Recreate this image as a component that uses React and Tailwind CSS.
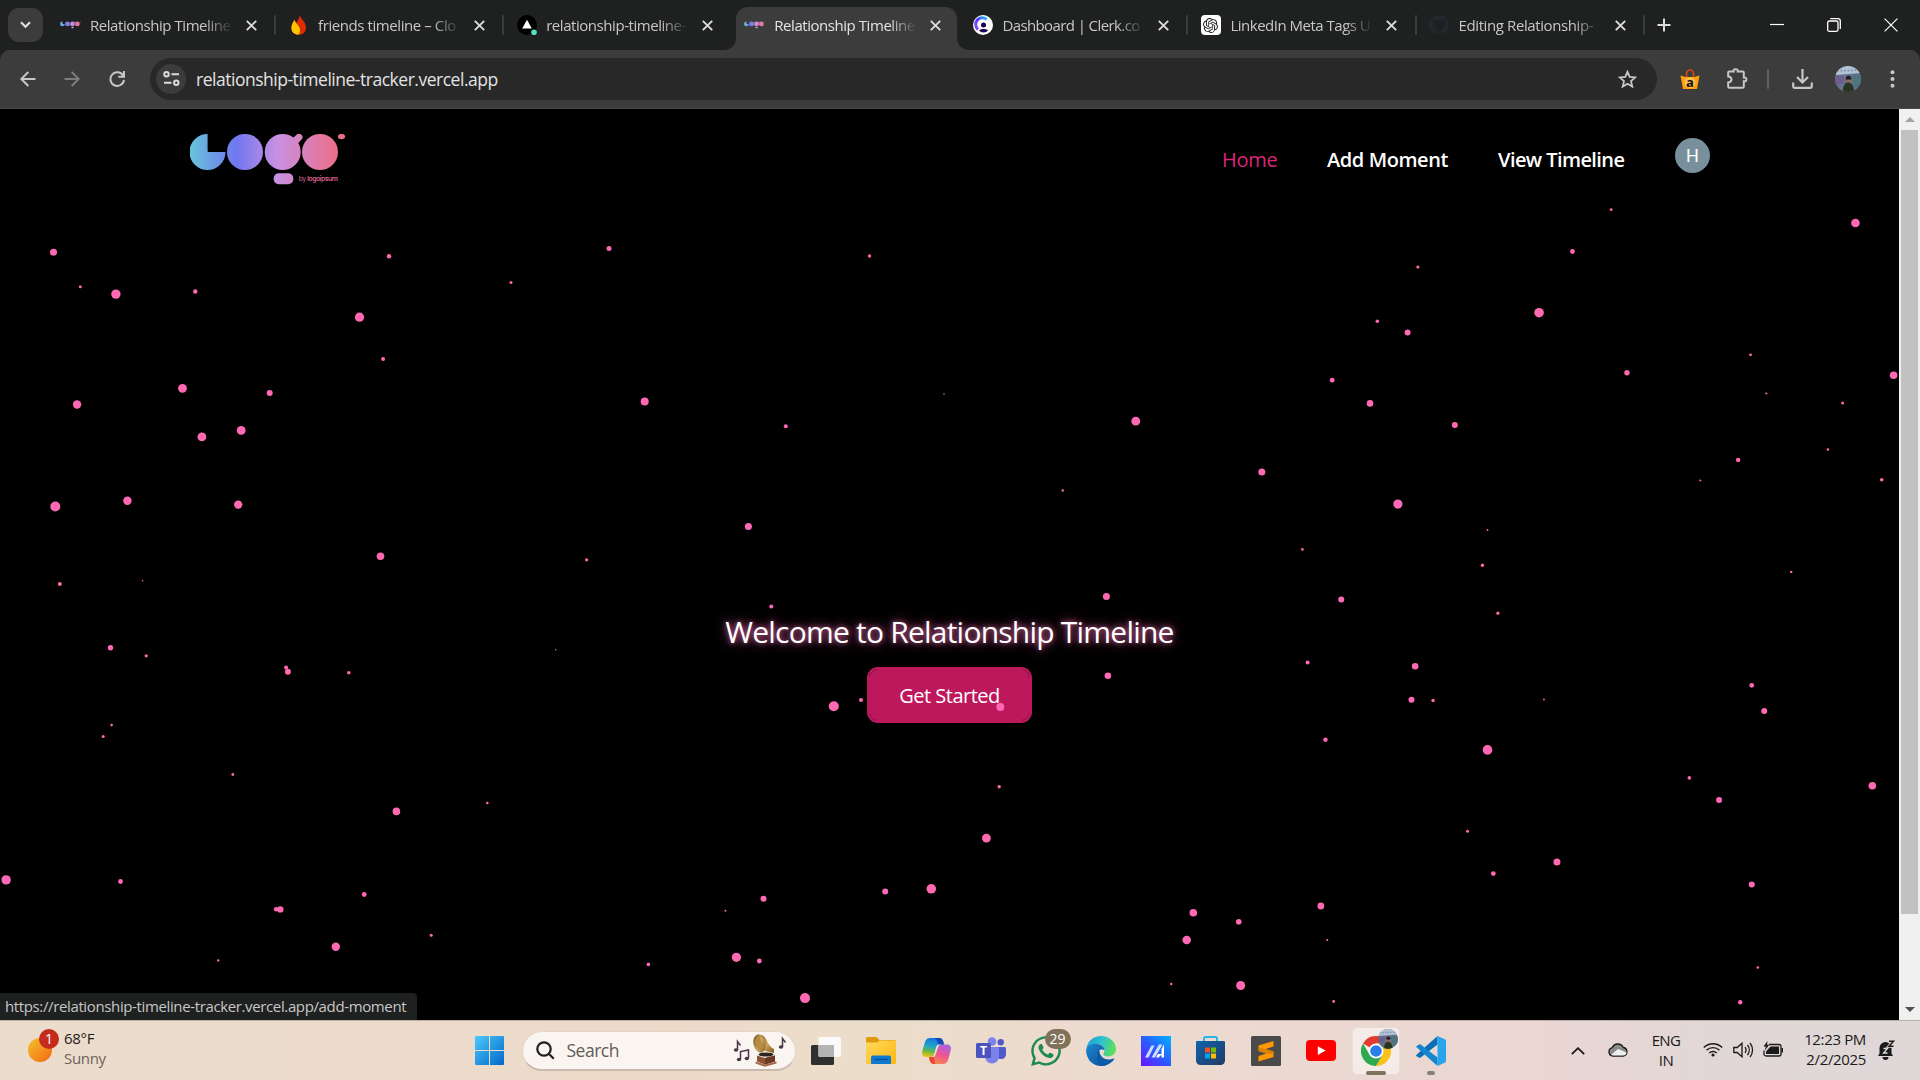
import React from "react";
import { FaGithub, FaWhatsapp } from "react-icons/fa";
import { SiOpenai } from "react-icons/si";

/* Floating particles: [x, y, radius] in viewport coordinates */
const LEFT_PARTICLES = [
  [53.5, 252.3, 3.5], [80.3, 286.8, 1.5], [115.9, 294.1, 4.7], [195.3, 291.5, 2.2], [389, 256.2, 2.2],
  [609, 248.6, 2.5], [511, 282.6, 1.5], [869.5, 256, 1.7], [359.5, 317.2, 4.6], [383.1, 359, 2],
  [182.5, 388.3, 4.4], [269.7, 393, 3], [77.1, 404.5, 4.2], [201.9, 436.9, 4.4], [241.2, 430.4, 4.4],
  [644.7, 401.4, 4], [785.8, 426.2, 2], [944, 394, 0.8], [55.3, 506.5, 5], [127.4, 500.7, 4.2],
  [238.2, 504.6, 4.2], [380.5, 556.2, 3.8], [586.6, 559.8, 1.6], [748.4, 526.4, 3.5], [59.8, 583.9, 2],
  [142.6, 580.7, 0.8], [771.3, 606.4, 2], [110.5, 647.7, 2.7], [146.2, 655.8, 1.6], [286.1, 667.6, 2],
  [287.9, 671.7, 3], [348.8, 672.8, 1.8], [555.7, 649.8, 0.7], [833.8, 706.3, 5], [861, 700, 2],
  [111.6, 725.1, 1.3], [103.2, 736.6, 1.5], [232.8, 774.5, 1.4], [396.4, 811.4, 3.8], [487.3, 803, 1.3],
  [6.1, 879.9, 4.7], [120.5, 881.5, 2.4], [364.2, 894.5, 2.4], [276.1, 909.2, 2.2], [280.3, 909.4, 3.2],
  [335.8, 946.8, 4.2], [431.2, 935.3, 1.5], [218.2, 960.4, 1.2], [648.4, 964.4, 1.8], [725.4, 910.8, 1],
  [763.5, 898.7, 3], [736.4, 957.3, 4.6], [759.3, 961, 2.4], [805, 998.1, 5], [885.2, 891.4, 3],
  [931.3, 888.8, 4.8],
];

const RIGHT_PARTICLES = [
  [1611.8, 209.7, 1.4], [1856.3, 223, 4.3], [1573, 251.5, 2.4], [1418.3, 267, 1.6],
  [1539.6, 312.7, 4.8], [1377.7, 321.3, 1.8], [1408, 332.6, 3], [1751.3, 354.8, 1.4], [1627.6, 372.8, 2.7],
  [1894.5, 375.2, 3.8], [1332.5, 380.2, 2.4], [1767.1, 393.5, 1.1], [1370.4, 403.4, 3.3], [1843.5, 402.9, 1.5],
  [1135.9, 421.2, 4.4], [1455.3, 424.9, 3], [1828.7, 449.5, 1.3], [1738.9, 459.9, 2.2], [1262.1, 472, 3.5],
  [1701, 480.6, 1], [1882.6, 479.8, 1.8], [1062.8, 490.5, 1.2], [1398.3, 504.1, 4.6], [1488, 530, 0.9],
  [1302.7, 549.4, 1.3], [1482.9, 565.3, 1.7], [1792, 571.9, 1.2], [1106.5, 596.4, 3.5], [1341.6, 599.6, 3],
  [1498.4, 613.2, 1.6], [1307.9, 662.6, 2], [1415.6, 666.3, 3.3], [1108, 675.7, 3.3], [1411.9, 699.7, 3],
  [1433.5, 700.5, 1.7], [1544.5, 699.5, 0.9], [1752.5, 685.3, 2.4], [1765, 711, 3], [1000.3, 707, 4],
  [1325.8, 739.7, 2.2], [1488, 749.9, 4.8], [999.2, 786.8, 1.7], [1690, 777.9, 1.8], [1873.2, 785.8, 3.8],
  [1719.8, 800.1, 3], [986.4, 838.1, 4.4], [1468, 831.3, 1.5], [1493.8, 873.6, 2.4], [1557.5, 862.1, 3.5],
  [1752.5, 884.6, 3], [1321.2, 906, 3.4], [1193.5, 912.8, 3.8], [1239, 921.7, 2.8], [1186.9, 940, 4.3],
  [1327.6, 940, 1], [1758.6, 967.5, 1.3], [1171.4, 984, 1.2], [1240.9, 985.5, 4.5], [1334, 1001.5, 1.4],
  [1741, 1002.3, 2.2],
];

const Dots = ({ points }) => points.map(([x, y, r], i) => <circle key={i} cx={x} cy={y} r={r} />);

function LogoArt({ id, caption }) {
  return (
    <>
      <defs>
        <linearGradient id={id} gradientUnits="userSpaceOnUse" x1="0" y1="0" x2="155" y2="0">
          <stop offset="0" stopColor="#67c3da" />
          <stop offset="0.3" stopColor="#7077f0" />
          <stop offset="0.56" stopColor="#c791e2" />
          <stop offset="1" stopColor="#f06a7d" />
        </linearGradient>
      </defs>
      <g fill={`url(#${id})`}>
        <path d="M17.5 0A18 18 0 1 0 35.5 18H18.6a1 1 0 0 1-1-1V0z" />
        <circle cx="55" cy="18" r="18" />
        <circle cx="92.7" cy="18" r="18" />
        <path d="M102 5l4.500-4.200a3.400 3.400 0 0 1 5 4.800l-4 4.500z" />
        <rect x="83.700" y="39.300" width="19.600" height="11" rx="5" />
        <circle cx="130" cy="18" r="18" />
        <ellipse cx="151.500" cy="2.500" rx="3.600" ry="2.700" />
      </g>
      {caption && (
        <text x="108.800" y="46.500" fontSize="6.800" fill="#d9638a" fontFamily="Inter, sans-serif" textLength="39">
          by <tspan fontWeight="600">logoipsum</tspan>
        </text>
      )}
    </>
  );
}

const LogoFavicon = ({ id }) => (
  <svg className="h-[8px] w-[21px]" viewBox="-1 -1 158 54">
    <LogoArt id={id} />
  </svg>
);

const Flame = () => (
  <svg width="16" height="20" viewBox="0 0 16 20">
    <path d="M8.500 0c1 3.500 6.500 7 6.500 12.500 0 4.500-3 7.300-7 7.300-3.500 0-5-3-4.500-6.800C4 8.500 8 5.500 8.500 0z" fill="#dd2c00" />
    <path d="M3.500 4.500C2 7 .5 9.500.5 13c0 4 3 6.500 7 6.500-3.500-3-1.500-5-1.500-8 0-3-2-4-2.500-7z" fill="#ff9100" />
    <path d="M3.300 5.500c2.200 3.500 5.700 6 5.700 9.500 0 3-1 4.800-2.500 4.500C2.500 19 .5 16.500.5 13c0-3 1.500-5 2.800-7.500z" fill="#ffc400" />
  </svg>
);

const VercelIcon = () => (
  <svg width="20" height="20" viewBox="0 0 20 20">
    <circle cx="10" cy="10" r="10" fill="#000" />
    <path d="M10 4.800l4.800 8.800H5.200z" fill="#fff" />
    <circle cx="17" cy="17.200" r="2.800" fill="#50e3c2" />
  </svg>
);

const ClerkIcon = () => (
  <svg width="20" height="20" viewBox="0 0 20 20">
    <defs>
      <linearGradient id="clerk" x1="1" y1="0" x2="0" y2="1">
        <stop offset="0" stopColor="#17ccfc" />
        <stop offset="0.5" stopColor="#5d31ff" />
        <stop offset="1" stopColor="#8a4dff" />
      </linearGradient>
    </defs>
    <circle cx="10" cy="10" r="10" fill="#fff" />
    <path d="M13.800 4.300A6.700 6.700 0 0 0 5 14.500" fill="none" stroke="url(#clerk)" strokeWidth="3" />
    <circle cx="10.500" cy="10" r="2.500" fill="#1f0256" />
    <path d="M6 15.200c2.500-1.600 6.500-1.600 9 0-1.800 3-7.200 3-9 0z" fill="#1f0256" />
  </svg>
);

const OpenAiIcon = () => (
  <span className="flex h-5 w-5 items-center justify-center rounded-[4px] bg-white text-[#222]">
    <SiOpenai size={15} />
  </span>
);

const TABS = [
  { title: "Relationship Timeline", icon: <LogoFavicon id="fav1" />, track: "tracking-[-0.45px]" },
  { title: "friends timeline – Clo", icon: <Flame />, track: "tracking-[-0.42px]" },
  { title: "relationship-timeline-", icon: <VercelIcon />, track: "tracking-[-0.45px]", noSep: true },
  { title: "Relationship Timeline", icon: <LogoFavicon id="fav2" />, track: "tracking-[-0.45px]", active: true, noSep: true },
  { title: "Dashboard | Clerk.co", icon: <ClerkIcon />, track: "tracking-[-0.6px]" },
  { title: "LinkedIn Meta Tags U", icon: <OpenAiIcon />, track: "tracking-[-0.5px]" },
  { title: "Editing Relationship-", icon: <FaGithub size={20} className="text-[#24292f]" />, track: "tracking-[-0.4px]" },
];

function Tab({ tab }) {
  return (
    <div className="relative flex h-[50px] w-[228.100px] shrink-0 items-center">
      {tab.active && (
        <svg className="absolute top-[7px] -left-[8px]" width="245" height="43" viewBox="0 0 245 43">
          <path d="M0 43c7 0 12-5 12-12V12C12 5 17 0 24 0h197c7 0 12 5 12 12v19c0 7 5 12 12 12z" fill="#3c3c3c" />
        </svg>
      )}
      <div className="relative ml-3 flex w-[21px] justify-center">{tab.icon}</div>
      <div
        className={`relative ml-[9px] w-[143px] pt-px text-[15px] whitespace-nowrap ${tab.track} ${tab.active ? "text-[#e3e3e3]" : "text-[#c7c7c7]"} [mask-image:linear-gradient(to_right,black_80%,transparent_100%)]`}
      >
        {tab.title}
      </div>
      <svg className="relative ml-[13px]" width="11" height="11" viewBox="0 0 11 11">
        <path d="M.8.8l9.400 9.400M10.200.8L.8 10.200" stroke="#dcdcdc" strokeWidth="1.900" />
      </svg>
      {!tab.noSep && <div className="relative ml-auto h-5 w-[2px] rounded bg-[#3c3c3c]" />}
    </div>
  );
}

function TabStrip() {
  return (
    <div className="flex h-[50px] items-center bg-[#1f2020]">
      <div className="ml-2 flex h-[34px] w-[35px] shrink-0 items-center justify-center rounded-[11px] bg-[#3c3c3c]">
        <svg width="11" height="8" viewBox="0 0 11 8">
          <path d="M1 1.300l4.500 4.500L10 1.300" fill="none" stroke="#e3e3e3" strokeWidth="2" />
        </svg>
      </div>
      <div className="ml-[5px] flex">
        {TABS.map((t, i) => (
          <Tab key={i} tab={t} />
        ))}
      </div>
      <svg className="ml-[12px]" width="14" height="14" viewBox="0 0 14 14">
        <path d="M7 .5v13M.5 7h13" stroke="#dcdcdc" strokeWidth="2" />
      </svg>
      <div className="mr-[22px] ml-auto flex items-center gap-[43px]">
        <svg width="14" height="14" viewBox="0 0 14 14">
          <path d="M0 6.500h14" stroke="#fff" strokeWidth="1.200" />
        </svg>
        <svg width="14" height="14" viewBox="0 0 14 14" fill="none" stroke="#fff" strokeWidth="1.300">
          <rect x=".7" y="3" width="10.300" height="10.300" rx="1.500" />
          <path d="M3.300.7H11A2.300 2.300 0 0 1 13.300 3v8" />
        </svg>
        <svg width="14" height="14" viewBox="0 0 14 14">
          <path d="M.6.6l12.800 12.800M13.400.6L.6 13.400" stroke="#fff" strokeWidth="1.200" />
        </svg>
      </div>
    </div>
  );
}

/* Round portrait used in the toolbar and on the taskbar's browser badge */
function Portrait({ size, id }) {
  return (
    <svg width={size} height={size} viewBox="0 0 26 26">
      <defs>
        <clipPath id={id}>
          <circle cx="13" cy="13" r="13" />
        </clipPath>
      </defs>
      <g clipPath={`url(#${id})`}>
        <path fill="#66718f" d="M0 0h26v26H0z" />
        <path fill="#b3c3d6" d="M0 0h26v7l-26 2z" />
        <path d="M2 5l22-1" stroke="#8b9ab0" strokeWidth="2" strokeDasharray="2 1.500" />
        <path fill="#6d5f8d" d="M0 10h9v8H0z" />
        <path fill="#4f7480" d="M17 9h9v12h-9z" />
        <circle cx="13.500" cy="12.500" r="2.700" fill="#241c1c" />
        <path fill="#9a6a55" d="M11.500 13.500h4l2 3h-6z" />
        <path fill="#27351e" d="M8 26c0-7 2-9.500 5-9.500s6 2.500 6 9.500z" />
      </g>
    </svg>
  );
}

function Toolbar() {
  return (
    <div className="bg-[#1f2020]">
      <div className="flex h-[59px] items-center rounded-t-[10px] border-b border-[#4a4a4a] bg-[#3c3c3c] pb-px">
        <svg className="ml-5" width="16" height="16" viewBox="0 0 16 16" fill="none" stroke="#c7c7c7" strokeWidth="2">
          <path d="M15.500 8H1.500M8.300 1L1.300 8l7 7" />
        </svg>
        <svg className="ml-[28px]" width="16" height="16" viewBox="0 0 16 16" fill="none" stroke="#7d7d7d" strokeWidth="2">
          <path d="M.5 8h14M7.700 1l7 7-7 7" />
        </svg>
        <svg className="ml-[29px]" width="17" height="16" viewBox="0 0 17 16" fill="none" stroke="#c7c7c7" strokeWidth="2">
          <path d="M14.300 5A6.800 6.800 0 1 0 15 8.800M15 0v5.700H9.300" />
        </svg>
        <div className="ml-[24px] flex h-[42px] w-[1507px] items-center rounded-full bg-[#282828]">
          <div className="ml-[6px] flex h-[30px] w-[30px] items-center justify-center rounded-full bg-[#3c3c3c]">
            <svg width="17" height="15" viewBox="0 0 17 15" fill="none" stroke="#dcdcdc" strokeWidth="2">
              <circle cx="3.500" cy="3.200" r="2.200" />
              <path d="M8.500 3.200H16M1 11.800h7.500" />
              <circle cx="13.300" cy="11.800" r="2.200" />
            </svg>
          </div>
          <div className="ml-[10px] pt-[2px] text-[17.5px] tracking-[-0.48px] text-[#e3e3e3]">relationship-timeline-tracker.vercel.app</div>
          <svg className="mr-[20px] ml-auto" width="19" height="18" viewBox="0 0 19 18" fill="none" stroke="#c7c7c7" strokeWidth="1.800">
            <path d="M9.500 1.800l2.200 5.100 5.600.5-4.300 3.700 1.300 5.500-4.800-2.900-4.800 2.900L6 11.100 1.700 7.400l5.600-.5z" />
          </svg>
        </div>
        <svg className="ml-[23px]" width="20" height="20" viewBox="0 0 20 20">
          <path d="M6.500 8V4.500a3.500 3.500 0 0 1 7 0V8" fill="none" stroke="#d9480f" strokeWidth="1.700" />
          <path d="M.5 6.500l5 1.500h9l5-1.500L17 20H3z" fill="#ff9f0a" />
          <circle cx="10" cy="13.500" r="5.500" fill="#ffc04d" />
          <text x="10" y="17.500" textAnchor="middle" fontSize="13" fontWeight="700" fontFamily="Open Sans" fill="#111">a</text>
        </svg>
        <svg className="ml-[26px]" width="22" height="21" viewBox="0 0 22 21">
          <path d="M2.200 4.500a1 1 0 0 1 1-1h4.500c-.4-2 .5-2.300 2-2.300s2.400.4 2 2.300h5.100a1 1 0 0 1 1 1v5c2-.3 2.600.4 2.600 1.800s-.6 2.200-2.600 1.900v5.600a1 1 0 0 1-1 1H3.200a1 1 0 0 1-1-1v-4.400c2.700-.2 3.300-1.800 3.300-2.800s-.6-2.800-3.300-3z" fill="none" stroke="#c7c7c7" strokeWidth="2" />
        </svg>
        <div className="ml-[19px] h-5 w-[2px] rounded bg-[#5f6061]" />
        <svg className="ml-[23px]" width="21" height="20" viewBox="0 0 21 20" fill="none" stroke="#c7c7c7" strokeWidth="2.200">
          <path d="M10.500 0v13M5 8l5.500 5.500L16 8M1.200 13.500v4a1.300 1.300 0 0 0 1.300 1.300h16a1.300 1.300 0 0 0 1.300-1.300v-4" />
        </svg>
        <div className="ml-[22px]">
          <Portrait size={26} id="avatarTop" />
        </div>
        <svg className="ml-[29px]" width="5" height="18" viewBox="0 0 5 18" fill="#c7c7c7">
          <circle cx="2.500" cy="2.200" r="2" />
          <circle cx="2.500" cy="9" r="2" />
          <circle cx="2.500" cy="15.800" r="2" />
        </svg>
      </div>
    </div>
  );
}

function WebPage() {
  return (
    <div className="relative flex h-[911px] bg-black">
      <div className="flex w-[1899px] flex-col">
        <header className="flex items-start">
          <svg className="mt-[25px] ml-[190px]" width="158" height="54" viewBox="0 0 158 54">
            <LogoArt id="logoMain" caption />
          </svg>
          <nav className="mt-[36px] ml-[874px] flex items-center text-[20px] leading-[30px] font-semibold whitespace-nowrap text-white">
            <span className="w-[105px] font-medium tracking-[-0.3px] text-[#db2777]">Home</span>
            <span className="w-[171px] tracking-[-0.42px]">Add Moment</span>
            <span className="w-[177px] tracking-[-0.58px]">View Timeline</span>
          </nav>
          <div className="mt-[29px] flex h-[35px] w-[35px] items-center justify-center rounded-full bg-[#78909c] font-[Roboto] text-[18px] text-white">
            H
          </div>
        </header>
        <main className="mt-[423.500px] flex flex-col items-center">
          <h1 className="text-[30px] leading-[40px] tracking-[-0.78px] whitespace-nowrap text-white [text-shadow:0_0_5px_rgba(255,130,195,0.6),0_0_12px_rgba(255,105,180,0.8)]">
            Welcome to Relationship Timeline
          </h1>
          <button className="mt-[15.500px] flex h-[56px] w-[165px] items-center justify-center rounded-[11px] bg-[#be185d] p-[3px] pt-[5px] text-[20px] tracking-[-0.52px] text-white">
            Get Started
          </button>
        </main>
      </div>
      <svg className="pointer-events-none absolute top-0 left-0" width="1899" height="911" viewBox="0 109 1899 911">
        <g fill="#ff69b4">
          <Dots points={LEFT_PARTICLES} />
          <g transform="translate(1 0) scale(0.999 1)">
            <Dots points={RIGHT_PARTICLES} />
          </g>
        </g>
        <g fill="none" stroke="#8a1246" strokeWidth="1">
          <path d="M870 677c0-4 3-7 7-7M1022 670c4 0 7 3 7 7M1029 713c0 4-3 7-7 7M877 720c-4 0-7-3-7-7" />
        </g>
      </svg>
      <div className="flex w-[21px] flex-col items-center bg-[#f0f0f0]">
        <svg className="mt-[8px]" width="10" height="5" viewBox="0 0 10 5">
          <path d="M5 0l5 5H0z" fill="#a3a3a3" />
        </svg>
        <div className="mt-[8px] h-[784px] w-[17px] bg-[#c1c1c1]" />
        <svg className="mt-auto mb-[8px]" width="10" height="5" viewBox="0 0 10 5">
          <path d="M5 5l5-5H0z" fill="#505050" />
        </svg>
      </div>
      <div className="absolute bottom-0 left-0 flex h-[27px] w-[417px] items-center rounded-tr-[4px] bg-[#1f2020] pl-[5px] text-[15px] tracking-[-0.37px] whitespace-nowrap text-[#c7c7c7]">
        https://relationship-timeline-tracker.vercel.app/add-moment
      </div>
    </div>
  );
}

const WindowsIcon = () => (
  <svg width="29" height="29" viewBox="0 0 29 29">
    <defs>
      <linearGradient id="win" x1="0" y1="0" x2="1" y2="1">
        <stop offset="0" stopColor="#4cc9fb" />
        <stop offset="1" stopColor="#0067c9" />
      </linearGradient>
    </defs>
    <path d="M1 0h13v14H0V1a1 1 0 0 1 1-1zM15 0h13a1 1 0 0 1 1 1v13H15zM0 15h14v14H1a1 1 0 0 1-1-1zM15 15h14v13a1 1 0 0 1-1 1H15z" fill="url(#win)" />
  </svg>
);

const Gramophone = () => (
  <svg width="54" height="34" viewBox="0 0 54 34">
    <defs>
      <linearGradient id="horn" x1="0" y1="0" x2="1" y2="1">
        <stop offset="0" stopColor="#5d3f13" />
        <stop offset="0.5" stopColor="#d2a95c" />
        <stop offset="1" stopColor="#80591f" />
      </linearGradient>
    </defs>
    <g fill="none" stroke="#4b3548" strokeWidth="1.500">
      <path d="M4.500 17V8.500l3 4M7.500 26v-7.500l8-1.500v8" />
      <path d="M49.500 14V5.500l3 4" />
    </g>
    <g fill="#4b3548">
      <ellipse cx="3" cy="17" rx="2.200" ry="1.700" />
      <ellipse cx="6" cy="26.500" rx="2.200" ry="1.700" />
      <ellipse cx="13.800" cy="25.500" rx="2.200" ry="1.700" />
      <ellipse cx="48" cy="14" rx="2.200" ry="1.700" />
    </g>
    <path d="M28 2c6 1 6 11 13 14v4c-7-1-10-3-15-3z" fill="url(#horn)" />
    <ellipse cx="26.500" cy="10.500" rx="6" ry="9.300" fill="url(#horn)" transform="rotate(-12 26.500 10.500)" />
    <ellipse cx="25.500" cy="10.500" rx="3" ry="6.500" fill="#b58a43" transform="rotate(-12 25.500 10.500)" />
    <ellipse cx="33" cy="21.500" rx="7.500" ry="2" fill="#2c2523" />
    <path d="M24 22.500l8 2.500 10-2.500v6l-10 3-8-3z" fill="#8d5134" />
    <path d="M32 25l10-2.500v6l-10 3z" fill="#6b3a25" />
    <path d="M22.500 28.500l9.500 3 11.500-3v2L32 33.800l-9.500-3.300z" fill="#a4694a" />
  </svg>
);

const TaskView = () => (
  <svg width="30" height="28" viewBox="0 0 30 28">
    <rect x="0" y="8" width="23" height="20" rx="1.500" fill="#2f2f2f" />
    <rect x="7.500" y="0" width="22.500" height="20" rx="1.500" fill="#fafafa" />
    <path d="M7.500 8H23v12H9a1.500 1.500 0 0 1-1.500-1.500z" fill="#b4b4b4" />
  </svg>
);

const Explorer = () => (
  <svg width="30" height="27" viewBox="0 0 30 27">
    <defs>
      <linearGradient id="folder" x1="0" y1="0" x2="1" y2="1">
        <stop offset="0" stopColor="#ffd95e" />
        <stop offset="1" stopColor="#fcb80f" />
      </linearGradient>
    </defs>
    <path d="M0 1.500A1.500 1.500 0 0 1 1.500 0h9l3 3H28.500A1.500 1.500 0 0 1 30 4.500V8H0z" fill="#dd9a0a" />
    <path d="M0 5.500h11L13.500 3.500H30V26a1 1 0 0 1-1 1H1a1 1 0 0 1-1-1z" fill="url(#folder)" />
    <path d="M5 27v-6.500a2 2 0 0 1 2-2h16a2 2 0 0 1 2 2V27z" fill="#0f7ad1" />
    <path d="M8.500 22.500h13" stroke="#0a4f94" strokeWidth="1.300" />
  </svg>
);

const Copilot = () => (
  <svg width="29" height="26" viewBox="0 0 29 26">
    <defs>
      <linearGradient id="cop1" x1="0.500" y1="0" x2="0.300" y2="1">
        <stop offset="0" stopColor="#1773d8" />
        <stop offset="0.450" stopColor="#22a6c8" />
        <stop offset="0.700" stopColor="#67b847" />
        <stop offset="1" stopColor="#f2c313" />
      </linearGradient>
      <linearGradient id="cop2" x1="0.700" y1="0" x2="0.300" y2="1">
        <stop offset="0" stopColor="#a962e0" />
        <stop offset="0.500" stopColor="#ee5590" />
        <stop offset="1" stopColor="#f98a4b" />
      </linearGradient>
    </defs>
    <path d="M17 0c2.500 0 3.500 1.500 4.200 3.500L22 6.500h-4c-2 0-3 1-3.600 3l-2 6.500c-.7 2-1.800 3-4 3H4c-3.500 0-4.500-3-3.700-6L3 4C3.800 1.300 5.500 0 8 0z" fill="url(#cop1)" />
    <path d="M12 26c-2.500 0-3.500-1.500-4.200-3.500L7 19.300h3c2 0 3-1 3.600-3l2.200-6.600c.7-2 1.800-3.200 4-3.200H25c3.500 0 4.500 3 3.700 6L26 22c-.8 2.700-2.500 4-5 4z" fill="url(#cop2)" />
    <path d="M12 0h5c2.500 0 3.500 1.500 4.200 3.500L22 6.500h-5C15 5 15 0 12 0z" fill="#1746b8" />
    <path d="M7 19h4c2.200 1 1 7 3 7h-2c-2.500 0-3.500-1.500-4.200-3.500z" fill="#e8492f" />
    <path d="M14 9.500c.6-2 1.600-3 3.600-3h2c-2.200 0-3.100 1.200-3.800 3.200l-2.200 6.600c-.6 2-1.600 2.800-3.600 2.800 1.400-.4 2-1.400 2.500-3.100z" fill="#ecdfd0" />
  </svg>
);

const Teams = () => (
  <svg width="30" height="27" viewBox="0 0 30 27">
    <circle cx="24.700" cy="5.300" r="3.200" fill="#5059c9" />
    <path d="M20 10h8.500A1.500 1.500 0 0 1 30 11.500V17c0 3-2 5-5 5s-5-2-5-5z" fill="#5059c9" />
    <circle cx="16" cy="4.500" r="4.300" fill="#7b83eb" />
    <path d="M9 10h12.500A1.500 1.500 0 0 1 23 11.500V19c0 4.500-3 7.500-7 7.500S9 23.500 9 19z" fill="#7b83eb" />
    <rect x="0" y="6" width="15" height="15" rx="1.500" fill="#4b53bc" />
    <text x="7.500" y="17.500" textAnchor="middle" fontSize="12" fontWeight="700" fontFamily="Open Sans" fill="#fff">T</text>
  </svg>
);

const Edge = () => (
  <svg width="30" height="30" viewBox="0 0 30 30">
    <defs>
      <linearGradient id="edgeTop" x1="0" y1="0.300" x2="1" y2="0.500">
        <stop offset="0" stopColor="#1f9fd6" />
        <stop offset="0.500" stopColor="#2cc3d0" />
        <stop offset="1" stopColor="#62e052" />
      </linearGradient>
      <linearGradient id="edgeLow" x1="0" y1="0" x2="1" y2="1">
        <stop offset="0" stopColor="#1c87cf" />
        <stop offset="1" stopColor="#0c4f9e" />
      </linearGradient>
    </defs>
    <path d="M.3 13C1.500 5 7.500 0 15 0c8.500 0 15 6 15 13 0 4.500-3.500 7.500-7.700 7.500-3.500 0-5-1.200-5-2.300 0-1 1.300-1.300 1.300-3.700C18.600 11 15 8 10.500 8 5.500 8 2 10.500.3 13z" fill="url(#edgeTop)" />
    <path d="M.1 14C1 10 5 7.800 9.500 7.800c5 0 9.100 3 9.100 6.700-2-2-8-1-8 5s5 9.500 10 9.500c-1.500.7-3.500 1-5.600 1C6.500 30 0 23 .1 14z" fill="url(#edgeLow)" />
    <path d="M13.500 13c-5 3-4.500 16 5 16.500 4-.5 7.500-3 9.700-6.200.4-.6-.2-1-.7-.8-1.500.7-3 1-4.700 1-6 0-10-4.500-9.300-10.500z" fill="#0d5aa8" />
  </svg>
);

const Armoury = () => (
  <svg width="30" height="30" viewBox="0 0 30 30">
    <defs>
      <linearGradient id="arm" x1="0" y1="1" x2="1" y2="0">
        <stop offset="0" stopColor="#6a12ff" />
        <stop offset="0.500" stopColor="#2a5dff" />
        <stop offset="1" stopColor="#00b4ff" />
      </linearGradient>
    </defs>
    <path d="M0 0h30v30H0z" fill="url(#arm)" />
    <path d="M4 21.500L10.500 9.500h3L7.500 21.500zM10.500 21.500L18 8.500h3.500L14 21.500z" fill="#cfdcff" />
    <path d="M15 21.500l2-3.500h3.500v-5l2.500-4.500V21.500h-2.500v-2h-1.500l-1 2z" fill="#fff" />
  </svg>
);

const Store = () => (
  <svg className="relative -left-px" width="29" height="29" viewBox="0 0 29 29">
    <defs>
      <linearGradient id="store" x1="0" y1="0" x2="1" y2="1">
        <stop offset="0" stopColor="#0f64ae" />
        <stop offset="1" stopColor="#213a63" />
      </linearGradient>
    </defs>
    <path d="M8 6V2.500A1.500 1.500 0 0 1 9.500 1h10A1.500 1.500 0 0 1 21 2.500V6" fill="none" stroke="#29b6e8" strokeWidth="2" />
    <path d="M0 6a1 1 0 0 1 1-1h27a1 1 0 0 1 1 1v18.500a4.500 4.500 0 0 1-4.500 4.500h-20A4.500 4.500 0 0 1 0 24.500z" fill="url(#store)" />
    <path d="M9 11.500h5v5H9z" fill="#f25022" />
    <path d="M15 11.500h5v5h-5z" fill="#7fba00" />
    <path d="M9 17.500h5v5H9z" fill="#00a4ef" />
    <path d="M15 17.500h5v5h-5z" fill="#ffb900" />
  </svg>
);

const Sublime = () => (
  <svg width="30" height="30" viewBox="0 0 30 30">
    <rect width="30" height="30" rx="1.500" fill="#4a4a4a" />
    <path d="M7.500 9.500L22.500 5v5.500l-8 2.500 8 2.500v5.500l-15 4.500V20l8-2.500-8-2.500z" fill="#ff9800" />
    <path d="M7.500 15l8 2.500 7 .5v-2.500L14.500 13 7.500 11.500z" fill="#e08000" />
  </svg>
);

const YouTube = () => (
  <svg width="30" height="21" viewBox="0 0 30 21">
    <rect width="30" height="21" rx="4" fill="#ff0000" />
    <path d="M11.800 6.200l7.800 4.400-7.800 4.400z" fill="#fff" />
  </svg>
);

const Chrome = () => (
  <svg width="30" height="30" viewBox="0 0 30 30">
    <path d="M15 15L2 7.500A15 15 0 0 1 28 7.500H15z" fill="#e33b2e" />
    <path d="M15 7.500h13A15 15 0 0 1 15 30l6.500-11.200z" fill="#fbc116" />
    <path d="M2 7.500A15 15 0 0 0 15 30l6.500-11.200H8.500z" fill="#2da94f" />
    <circle cx="15" cy="15" r="7.500" fill="#fff" />
    <circle cx="15" cy="15" r="5.800" fill="#2b7de9" />
  </svg>
);

const VsCode = () => (
  <svg width="30" height="30" viewBox="0 0 30 30">
    <path d="M21.500 0v8.500L4 22l-3-1.500a1.200 1.200 0 0 1-.2-2z" fill="#0a6fb8" />
    <path d="M21.500 30v-8.500L4 8 1 9.700a1.200 1.200 0 0 0-.2 1.900z" fill="#1486cf" />
    <path d="M21.500 0l7.300 3.300A2 2 0 0 1 30 5v20a2 2 0 0 1-1.200 1.700L21.500 30z" fill="#28a4ee" />
  </svg>
);

const Slot = ({ children }) => <div className="relative flex h-[48px] w-[55px] items-center justify-center">{children}</div>;

function Taskbar() {
  return (
    <div className="flex h-[60px] items-center border-t border-[#bdb0a6] bg-[linear-gradient(90deg,#ebdccb_0%,#ebdccc_10%,#ecdacb_19%,#ecdac9_35%,#ecddca_45%,#ecdad0_60%,#ead6d3_80%,#e1d7d7_90%,#dfd7d8_100%)]">
      <div className="flex w-[475px] items-center pb-[5px]">
        <div className="relative ml-[28px] h-[38px] w-[31px]">
          <div className="absolute top-[9px] left-0 h-6 w-6 rounded-full bg-gradient-to-br from-[#f0c02c] to-[#f2640f]" />
          <div className="absolute top-0 left-[11px] flex h-5 w-5 items-center justify-center rounded-full bg-[#c42b1c] text-[14px] leading-none text-white">
            1
          </div>
        </div>
        <div className="ml-[5px] text-[15px] leading-[20px] tracking-[-0.3px]">
          <div className="text-[#1f1b18]">68°F</div>
          <div className="text-[#6b625a]">Sunny</div>
        </div>
      </div>
      <WindowsIcon />
      <div className="ml-[17.500px] flex h-[40px] w-[274px] items-center rounded-full border border-b-2 border-[#e3d5c9] border-b-[#c9b9ae] bg-[#faf5f1]">
        <svg className="ml-[13px]" width="19" height="19" viewBox="0 0 19 19" fill="none" stroke="#1f1f1f" strokeWidth="2.200">
          <circle cx="8" cy="8" r="6.700" />
          <path d="M12.800 12.800l5 5" />
        </svg>
        <span className="ml-[12px] text-[17.5px] tracking-[-0.5px] text-[#5f5b57]">Search</span>
        <div className="mr-[8px] ml-auto">
          <Gramophone />
        </div>
      </div>
      <div className="ml-[3px] flex items-center">
        <Slot><TaskView /></Slot>
        <Slot><Explorer /></Slot>
        <Slot><Copilot /></Slot>
        <Slot><Teams /></Slot>
        <Slot>
          <FaWhatsapp size={34} className="text-[#1f8a50]" />
          <div className="absolute top-[2px] left-[26px] flex h-5 w-[26px] items-center justify-center rounded-full bg-[#7f7259] text-[14px] leading-none text-white">
            29
          </div>
        </Slot>
        <Slot><Edge /></Slot>
        <Slot><Armoury /></Slot>
        <Slot><Store /></Slot>
        <Slot><Sublime /></Slot>
        <Slot><YouTube /></Slot>
        <Slot>
          <div className="flex h-[48px] w-[48px] items-center justify-center rounded-[5px] border border-[#e9dcd6] bg-[#f5ece8]">
            <Chrome />
          </div>
          <div className="absolute top-[2px] left-[29px] flex rounded-full">
            <Portrait size={20} id="avatarBar" />
          </div>
          <div className="absolute bottom-0 left-[17px] h-1 w-5 rounded-full bg-[#7f7259]" />
        </Slot>
        <Slot>
          <VsCode />
          <div className="absolute bottom-0 left-[23px] h-1 w-2 rounded-full bg-[#857d7c]" />
        </Slot>
      </div>
      <div className="mr-[25px] ml-auto flex items-center text-[15px] leading-[20px] text-[#1b1a1a]">
        <svg width="14" height="8" viewBox="0 0 14 8" fill="none" stroke="#1b1a1a" strokeWidth="1.800">
          <path d="M.8 7.200L7 1.200l6.200 6" />
        </svg>
        <svg className="mb-[2px] ml-[23px]" width="20" height="15" viewBox="0 0 20 15">
          <path d="M5 14a4.200 4.200 0 0 1-.7-8.300A6 6 0 0 1 15.300 5.500 4.300 4.300 0 0 1 15.200 14z" fill="#8a8a8a" stroke="#1b1a1a" strokeWidth="1.300" />
          <path d="M3 13l7-6 8.500 3.500c-.3 2-1.500 2.900-3.300 2.900H5z" fill="#eee" />
        </svg>
        <div className="ml-[22px] w-[32px] pb-[2px] text-center tracking-[-0.6px]">
          <div>ENG</div>
          <div>IN</div>
        </div>
        <svg className="mb-[2px] ml-[21px]" width="20" height="15" viewBox="0 0 20 15" fill="none" stroke="#1b1a1a" strokeWidth="1.400">
          <path d="M.8 5.500a13 13 0 0 1 18.400 0M3.500 8.300a9.200 9.200 0 0 1 13 0M6.200 11a5.400 5.400 0 0 1 7.600 0" />
          <circle cx="10" cy="13" r="1.600" fill="#1b1a1a" stroke="none" />
        </svg>
        <svg className="mb-px ml-[10px]" width="21" height="16" viewBox="0 0 21 16" fill="none" stroke="#1b1a1a" strokeWidth="1.300">
          <path d="M.8 5.500h3.400L9 1.200v13.600l-4.800-4.300H.8zM12 5.200a4.500 4.500 0 0 1 0 5.600M14.500 3a8 8 0 0 1 0 10M17 1a11 11 0 0 1 0 14" />
        </svg>
        <svg className="mb-[3px] ml-[9px]" width="20" height="16" viewBox="0 0 20 16">
          <path d="M6 3.500h10a2 2 0 0 1 2 2v7.500a2 2 0 0 1-2 2H3a2 2 0 0 1-2-2V9.500" fill="none" stroke="#1b1a1a" strokeWidth="1.300" />
          <path d="M7.500 5.500h8.500v7.500H3v-2.500z" fill="#1b1a1a" />
          <path d="M4.500 0L.5 5.500h2.300L1.800 9.500l4.500-5.700H4z" fill="#1b1a1a" />
          <path d="M18.500 7h1.500v4.500h-1.500z" fill="#1b1a1a" />
        </svg>
        <div className="ml-[19px] w-[64px] pb-[4px] text-right tracking-[-0.35px] whitespace-nowrap">
          <div>12:23 PM</div>
          <div>2/2/2025</div>
        </div>
        <svg className="mb-px ml-[11px]" width="18" height="20" viewBox="0 0 18 20">
          <path d="M2.500 13.500V8a6 6 0 0 1 12 0v5.500l1.500 2.500H1z" fill="#1b1a1a" />
          <path d="M5.500 17h6a3 3 0 0 1-6 0z" fill="#1b1a1a" />
          <path d="M6.500 8.500h4l-4 4.500h4" fill="none" stroke="#e1d7d7" strokeWidth="1.300" />
          <path d="M12 1.300h4.500L12 6.300h4.500" fill="none" stroke="#e1d7d7" strokeWidth="3" />
          <path d="M12 1.300h4.500L12 6.300h4.500" fill="none" stroke="#1b1a1a" strokeWidth="1.400" />
        </svg>
      </div>
    </div>
  );
}

export default function App() {
  return (
    <div className="flex h-[1080px] w-[1920px] flex-col overflow-hidden bg-black font-['Open_Sans','Noto_Sans',sans-serif]">
      <TabStrip />
      <Toolbar />
      <WebPage />
      <Taskbar />
    </div>
  );
}
